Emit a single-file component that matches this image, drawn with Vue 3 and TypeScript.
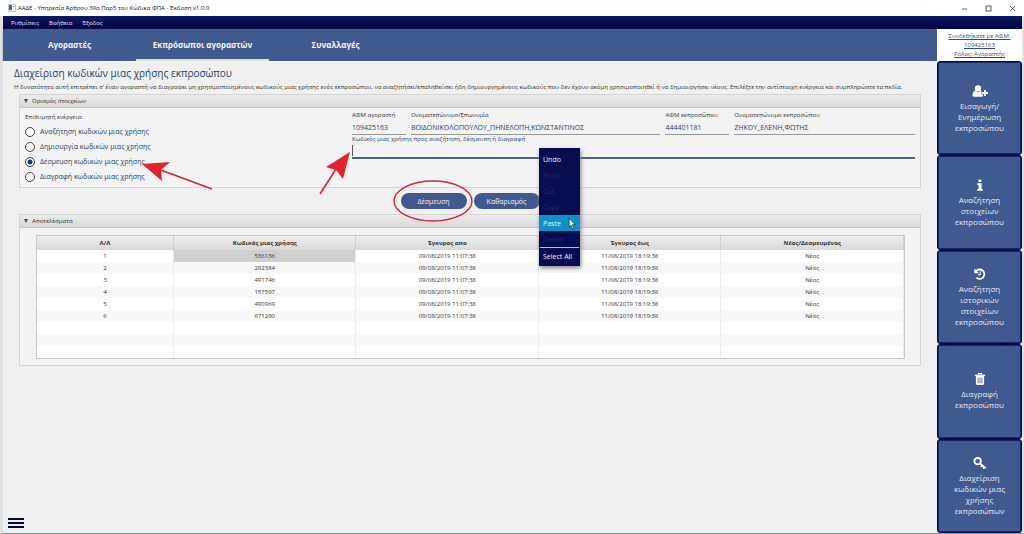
<script setup lang="ts">
import { ref } from 'vue'

interface Row {
  code: string
  from: string
  to: string
  state: string
}

const menus = ['Ρυθμίσεις', 'Βοήθεια', 'Έξοδος']
const tabs = ['Αγοραστές', 'Εκπρόσωποι αγοραστών', 'Συναλλαγές']
const activeTab = ref(1)

const actions = [
  'Αναζήτηση κωδικών μιας χρήσης',
  'Δημιουργία κωδικών μιας χρήσης',
  'Δέσμευση κωδικών μιας χρήσης',
  'Διαγραφή κωδικών μιας χρήσης',
]
const action = ref(2)

const fields = [
  { id: 'buyer-afm', label: 'ΑΦΜ αγοραστή', value: '109425163' },
  { id: 'buyer-name', label: 'Ονοματεπώνυμο/Επωνυμία', value: 'ΒΟΙΔΟΝΙΚΟΛΟΠΟΥΛΟΥ_ΠΗΝΕΛΟΠΗ,ΚΩΝΣΤΑΝΤΙΝΟΣ' },
  { id: 'rep-afm', label: 'ΑΦΜ εκπροσώπου', value: '444401181' },
  { id: 'rep-name', label: 'Ονοματεπώνυμο εκπροσώπου', value: 'ΖΗΚΟΥ_ΕΛΕΝΗ,ΦΩΤΗΣ' },
]
const code = ref('')

const contextItems = [
  { text: 'Undo', disabled: false },
  { text: 'Redo', disabled: true },
  { text: 'Cut', disabled: true },
  { text: 'Copy', disabled: true },
  { text: 'Paste', disabled: false },
  { text: 'Delete', disabled: true },
]

const columns = ['Α/Α', 'Κωδικός μιας χρήσης', 'Έγκυρος απο', 'Έγκυρος έως', 'Νέος/Δεσμευμένος']
const rows: Row[] = ['536136', '292384', '491746', '157597', '490969', '671290'].map((c) => ({
  code: c,
  from: '09/08/2019 11:07:38',
  to: '11/08/2019 18:19:38',
  state: 'Νέος',
}))
const emptyRows = 3

const sideItems = [
  { icon: 'user', lines: ['Εισαγωγή/', 'Ενημέρωση', 'εκπροσώπου'] },
  { icon: 'info', lines: ['Αναζήτηση', 'στοιχείων', 'εκπροσώπου'] },
  { icon: 'history', lines: ['Αναζήτηση', 'ιστορικών', 'στοιχείων', 'εκπροσώπου'] },
  { icon: 'trash', lines: ['Διαγραφή', 'εκπροσώπου'] },
  { icon: 'key', lines: ['Διαχείριση', 'κωδικών μιας', 'χρήσης', 'εκπροσώπων'] },
]
</script>

<template>
  <div class="window">
    <header class="titlebar">
      <svg class="app-icon" viewBox="0 0 8 8" aria-hidden="true">
        <rect x="0.5" y="0.5" width="7" height="7" fill="#f4f6f8" stroke="#c3c9d0" />
        <rect x="1" y="1" width="3" height="5" fill="#4c6a86" />
        <rect x="5" y="2" width="2" height="1" fill="#8fa3b5" />
      </svg>
      <h1>ΑΑΔΕ - Υπηρεσία Άρθρου 39α Παρ5 του Κώδικα ΦΠΑ - Έκδοση v1.0.0</h1>
      <div class="controls">
        <button type="button" aria-label="Minimize">
          <svg viewBox="0 0 7 7"><path d="M1 4H6" /></svg>
        </button>
        <button type="button" aria-label="Maximize">
          <svg viewBox="0 0 7 7"><rect x="1" y="1" width="5" height="5" /></svg>
        </button>
        <button type="button" aria-label="Close">
          <svg viewBox="0 0 7 7"><path d="M1 1L6 6M6 1L1 6" /></svg>
        </button>
      </div>
    </header>

    <div class="frame">
      <nav class="menubar">
        <button v-for="m in menus" :key="m" type="button">{{ m }}</button>
      </nav>

      <div class="body">
        <main class="main">
          <nav class="tabs">
            <button
              v-for="(t, i) in tabs"
              :key="t"
              type="button"
              :class="{ active: i === activeTab }"
              @click="activeTab = i"
            >
              {{ t }}
            </button>
          </nav>

          <section class="content">
            <h2>Διαχείριση κωδικών μιας χρήσης εκπροσώπου</h2>
            <p class="intro">
              Η δυνατότητα αυτή επιτρέπει σ' έναν αγοραστή να διαγραψει μη χρησιμοποιημένους κωδικούς μιας χρήσης ενός εκπροσώπου, να αναζητήσει/επαληθεύσει ήδη δημιουργημένους κωδικούς που δεν έχουν ακόμη χρησιμοποιηθεί ή να δημιουργήσει νέους. Επιλέξτε την αντίστοιχη ενέργεια και συμπληρώστε τα πεδία.
            </p>

            <section class="panel">
              <button type="button" class="panel-head"><span class="caret"></span>Ορισμός στοιχείων</button>
              <div class="panel-form">
                <fieldset class="actions">
                  <legend>Επιθυμητή ενέργεια:</legend>
                  <label v-for="(a, i) in actions" :key="a" class="option">
                    <input v-model="action" type="radio" name="action" :value="i" />
                    <span>{{ a }}</span>
                    <svg v-if="i === 2" class="arrow-left" viewBox="0 0 72 30" aria-hidden="true">
                      <path class="line" d="M16 7L70 27" />
                      <path class="tip" d="M0 2L28 0L19 8L20 19Z" />
                    </svg>
                  </label>
                </fieldset>

                <div class="fields">
                  <div v-for="f in fields" :key="f.id" class="field">
                    <label :for="f.id">{{ f.label }}</label>
                    <input :id="f.id" type="text" :value="f.value" readonly />
                  </div>
                  <div class="field code">
                    <label for="code">Κωδικός μιας χρήσης προς αναζήτηση, δέσμευση ή διαγραφή</label>
                    <input id="code" v-model="code" type="text" />
                    <span class="text-cursor"></span>
                    <svg class="arrow-up" viewBox="0 0 32 44" aria-hidden="true">
                      <path class="line" d="M17 17L1 42" />
                      <path class="tip" d="M31 0L7 15L17 18L24 27Z" />
                    </svg>
                    <div class="context-menu" role="menu">
                      <button
                        v-for="c in contextItems"
                        :key="c.text"
                        type="button"
                        role="menuitem"
                        :disabled="c.disabled"
                        :class="{ hovered: c.text === 'Paste' }"
                      >
                        {{ c.text }}
                      </button>
                      <hr />
                      <button type="button" role="menuitem">Select All</button>
                      <svg class="pointer" viewBox="0 0 7 11" aria-hidden="true">
                        <path d="M1 0.8V8.6L2.7 7L3.9 9.8L5.1 9.3L3.9 6.6H6.3Z" />
                      </svg>
                    </div>
                  </div>
                </div>
              </div>
            </section>

            <div class="buttons">
              <span class="circled">
                <button type="button">Δέσμευση</button>
                <svg viewBox="0 0 82 44" aria-hidden="true">
                  <ellipse cx="41" cy="22" rx="39" ry="20" />
                </svg>
              </span>
              <button type="button">Καθαρισμός</button>
            </div>

            <section class="panel">
              <button type="button" class="panel-head"><span class="caret"></span>Αποτελέσματα</button>
              <div class="panel-table">
                <table>
                  <thead>
                    <tr>
                      <th v-for="c in columns" :key="c" scope="col">{{ c }}</th>
                    </tr>
                  </thead>
                  <tbody>
                    <tr v-for="(r, i) in rows" :key="r.code">
                      <td>{{ i + 1 }}</td>
                      <td :class="{ selected: i === 0 }">{{ r.code }}</td>
                      <td>{{ r.from }}</td>
                      <td>{{ r.to }}</td>
                      <td>{{ r.state }}</td>
                    </tr>
                    <tr v-for="n in emptyRows" :key="'empty' + n">
                      <td v-for="c in columns" :key="c"></td>
                    </tr>
                  </tbody>
                </table>
              </div>
            </section>

            <button type="button" class="burger" aria-label="Menu">
              <span></span><span></span><span></span>
            </button>
          </section>
        </main>

        <aside class="side">
          <a href="#" class="login">Συνδεθήκατε με ΑΦΜ:<br />109425163<br />Ρόλος: Αγοραστής</a>
          <button v-for="s in sideItems" :key="s.icon" type="button">
            <svg v-if="s.icon === 'user'" viewBox="0 0 16 14" aria-hidden="true">
              <circle cx="6" cy="4.4" r="3.2" />
              <path d="M0.5 11.2C0.5 8.7 1.5 7.3 3 7.1C4.7 8.6 7.3 8.6 9 7.1L9.4 7.2V10.4H11V12.3Q10.6 12.7 9.8 12.7H2.2Q0.5 12.7 0.5 11.2Z" />
              <path d="M12 6H14V8.1H16V10H14V12.1H12V10H10V8.1H12Z" />
            </svg>
            <svg v-else-if="s.icon === 'info'" viewBox="0 0 16 14" aria-hidden="true">
              <rect x="6.4" y="1.5" width="3" height="2.5" rx="0.5" />
              <path d="M5.3 5.2H9.6V11H10.7V12.8H5.3V11H6.5V7H5.3Z" />
            </svg>
            <svg v-else-if="s.icon === 'history'" viewBox="0 0 16 14" aria-hidden="true">
              <path class="stroke" d="M4.1 4.1A4.7 4.7 0 1 1 4.4 10.6" />
              <path d="M2.3 1.6V6.3H7Z" />
              <path class="thin" d="M8.2 4.6V7.7H6" />
            </svg>
            <svg v-else-if="s.icon === 'trash'" viewBox="0 0 16 14" aria-hidden="true">
              <path class="thin" d="M6 3L6.5 1.6H9.5L10 3" />
              <rect x="3" y="2.8" width="10" height="1.4" />
              <path d="M3.9 4H12.1V11.6Q12.1 13 10.8 13H5.2Q3.9 13 3.9 11.6Z" />
              <path class="slots" d="M6.1 5.4V11.4M8 5.4V11.4M9.9 5.4V11.4" />
            </svg>
            <svg v-else viewBox="0 0 16 14" aria-hidden="true">
              <circle class="stroke" cx="5.6" cy="5.2" r="3.2" />
              <path class="stroke" d="M8 7.4L13.8 12.2M10.4 9.2L9 11M12.4 11L11.2 12.8" />
            </svg>
            <span v-for="l in s.lines" :key="l">{{ l }}</span>
          </button>
        </aside>
      </div>
    </div>
  </div>
</template>

<style>
html,
body {
  margin: 0;
  background: #f0f0f0;
}
</style>

<style scoped>
* {
  box-sizing: border-box;
}
.window {
  min-height: 100vh;
  display: flex;
  flex-direction: column;
  font-family: 'Open Sans', 'Noto Sans', sans-serif;
  font-size: 6px;
  color: #333;
}
button {
  font: inherit;
  color: inherit;
  border: 0;
  padding: 0;
  background: none;
}
.titlebar {
  height: 16px;
  display: flex;
  align-items: center;
  padding: 0 8px 0 8px;
  background: #fff;
}
.app-icon {
  width: 8px;
  height: 8px;
  margin-right: 2px;
}
.titlebar h1 {
  flex: 1;
  margin: 0;
  font-size: 6px;
  font-weight: 400;
  color: #111;
}
.controls {
  display: flex;
  gap: 17px;
}
.controls button,
.controls svg {
  display: block;
  width: 7px;
  height: 7px;
}
.controls svg * {
  fill: none;
  stroke: #333;
  stroke-width: 0.8;
}
.frame {
  flex: 1;
  display: flex;
  flex-direction: column;
  border-left: 3px solid #e2e2e4;
  border-right: 2px solid #e2e2e4;
  border-bottom: 1px solid #6f9cc0;
}
.menubar {
  height: 13px;
  display: flex;
  gap: 10px;
  padding: 0 8px;
  background: linear-gradient(#0c1a66, #020440);
  color: #e6e8f2;
}
.body {
  flex: 1;
  display: flex;
}
.main {
  flex: 1;
  min-width: 0;
  display: flex;
  flex-direction: column;
}
.tabs {
  height: 32px;
  display: flex;
  background: #40598f;
  box-shadow: 0 1px 2px #8f95a5;
}
.tabs button {
  width: 133px;
  font-size: 8px;
  font-weight: 700;
  color: #f2f4fa;
  border-bottom: 2px solid transparent;
}
.tabs .active {
  border-bottom-color: #dfe6c4;
}
.content {
  flex: 1;
  display: flex;
  flex-direction: column;
  padding: 4px 16px 5px 16px;
  background: #f0f0f0;
}
h2 {
  margin: 0 0 0 -5px;
  font-size: 10px;
  line-height: 16px;
  font-weight: 400;
  color: #26426e;
}
.intro {
  margin: 0 0 0 -5px;
  line-height: 13px;
  white-space: nowrap;
}
.panel {
  border: 1px solid #d4d4d4;
  background: #f3f3f3;
}
.panel-head {
  display: flex;
  align-items: center;
  gap: 4px;
  width: 100%;
  height: 13px;
  padding: 0 4px;
  background: linear-gradient(#ececec, #d8d8d8);
  border-bottom: 1px solid #c8c8c8;
}
.caret {
  border: 2px solid transparent;
  border-top: 4px solid #444;
  border-bottom: 0;
}
.panel-form {
  display: flex;
  padding: 3px 5px;
}
.actions {
  width: 327px;
  margin: 0;
  padding: 0;
  border: 0;
}
.actions legend {
  padding: 0;
  line-height: 13px;
}
.option {
  position: relative;
  display: flex;
  align-items: center;
  gap: 5px;
  width: max-content;
  height: 15px;
  font-size: 7px;
  color: #26426e;
}
.option input {
  appearance: none;
  width: 10px;
  height: 10px;
  margin: 0;
  border: 1px solid #444;
  border-radius: 50%;
  background: #fff;
}
.option input:checked {
  border-color: #163a6b;
  background: radial-gradient(#163a6b 0 2px, #fff 3px);
}
.arrow-left {
  position: absolute;
  left: 117px;
  top: 8px;
  width: 72px;
  height: 30px;
}
.line {
  fill: none;
  stroke: #cf2733;
  stroke-width: 1.6;
}
.tip {
  fill: #e0232e;
}
.fields {
  flex: 1;
  display: grid;
  grid-template-columns: 54fr 250fr 64fr 181fr;
  column-gap: 5px;
  align-content: start;
}
.field {
  position: relative;
  display: flex;
  flex-direction: column;
  min-width: 0;
}
.field label {
  line-height: 9px;
  white-space: nowrap;
}
.field input {
  width: 100%;
  height: 15px;
  padding: 0;
  border: 0;
  border-bottom: 1px solid #999;
  outline: 0;
  background: none;
  font: inherit;
  font-size: 7px;
  color: #26426e;
}
.code {
  grid-column: 1 / -1;
}
.code label {
  color: #26426e;
}
.code input {
  border-bottom: 2px solid #48608a;
}
.text-cursor {
  position: absolute;
  left: 0;
  top: 10px;
  width: 1px;
  height: 11px;
  background: #556;
}
.arrow-up {
  position: absolute;
  left: -33px;
  top: 17px;
  width: 32px;
  height: 44px;
}
.context-menu {
  position: absolute;
  left: 187px;
  top: 13px;
  z-index: 2;
  display: flex;
  flex-direction: column;
  width: 41px;
  padding: 3px 0 2px;
  background: #080c50;
  box-shadow: 1px 2px 4px #888;
  font-size: 7px;
  color: #eef0fa;
}
.context-menu button {
  height: 16px;
  padding: 0 4px;
  text-align: left;
}
.context-menu button:disabled {
  color: #242a66;
}
.context-menu .hovered {
  background: #0b93c4;
}
.context-menu hr {
  height: 1px;
  width: 39px;
  margin: 0 1px;
  border: 0;
  background: #b9bdd8;
}
.pointer {
  position: absolute;
  left: 29px;
  top: 69px;
  width: 8px;
  height: 13px;
  fill: #fff;
  stroke: #222;
  stroke-width: 0.6;
}
.buttons {
  display: flex;
  justify-content: center;
  gap: 7px;
  padding: 5px 0;
  font-size: 7px;
}
.buttons button {
  display: block;
  width: 66px;
  height: 16px;
  border-radius: 8px;
  background: #40598f;
  color: #f2f4fa;
}
.circled {
  position: relative;
}
.circled svg {
  position: absolute;
  left: -9px;
  top: -14px;
  width: 82px;
  height: 44px;
  fill: none;
  stroke: #cf2733;
  stroke-width: 1.4;
}
.panel-table {
  padding: 7px 15px 6px 16px;
}
table {
  width: 100%;
  table-layout: fixed;
  border-collapse: separate;
  border-spacing: 0;
  border: 1px solid #c8c8c8;
  background: #fff;
}
th,
td {
  height: 12px;
  padding: 0;
  line-height: 10px;
  text-align: center;
  border-right: 1px solid #ececec;
}
th {
  height: 14px;
  font-weight: 700;
  color: #333;
  background: linear-gradient(#eee, #d9d9d9);
  border-right-color: #cfcfcf;
}
th:first-child {
  width: 15.8%;
}
tbody tr:nth-child(even) {
  background: #f8f8f8;
}
.selected {
  background: #cfcfcf;
}
.burger {
  display: flex;
  flex-direction: column;
  gap: 2px;
  width: 16px;
  margin-top: auto;
  margin-left: -11px;
}
.burger span {
  height: 2px;
  background: #05083f;
}
.side {
  width: 85px;
  display: flex;
  flex-direction: column;
}
.login {
  height: 32px;
  padding-top: 3px;
  background: #fff;
  color: #2d4a86;
  line-height: 9px;
  text-align: center;
}
.side button {
  flex: 1;
  display: flex;
  flex-direction: column;
  align-items: center;
  justify-content: center;
  border: 1px solid #040a4a;
  border-radius: 3px;
  background: #40598f;
  box-shadow: inset 0 0 0 1px #16246a;
  color: #e6eaf5;
  font-size: 8px;
  line-height: 11px;
}
.side svg {
  width: 16px;
  height: 14px;
  margin-bottom: 2px;
  fill: #fff;
}
.side .stroke {
  fill: none;
  stroke: #fff;
  stroke-width: 1.8;
}
.side .thin {
  fill: none;
  stroke: #fff;
  stroke-width: 1.1;
}
.side .slots {
  stroke: #65779f;
  stroke-width: 1;
}
</style>
